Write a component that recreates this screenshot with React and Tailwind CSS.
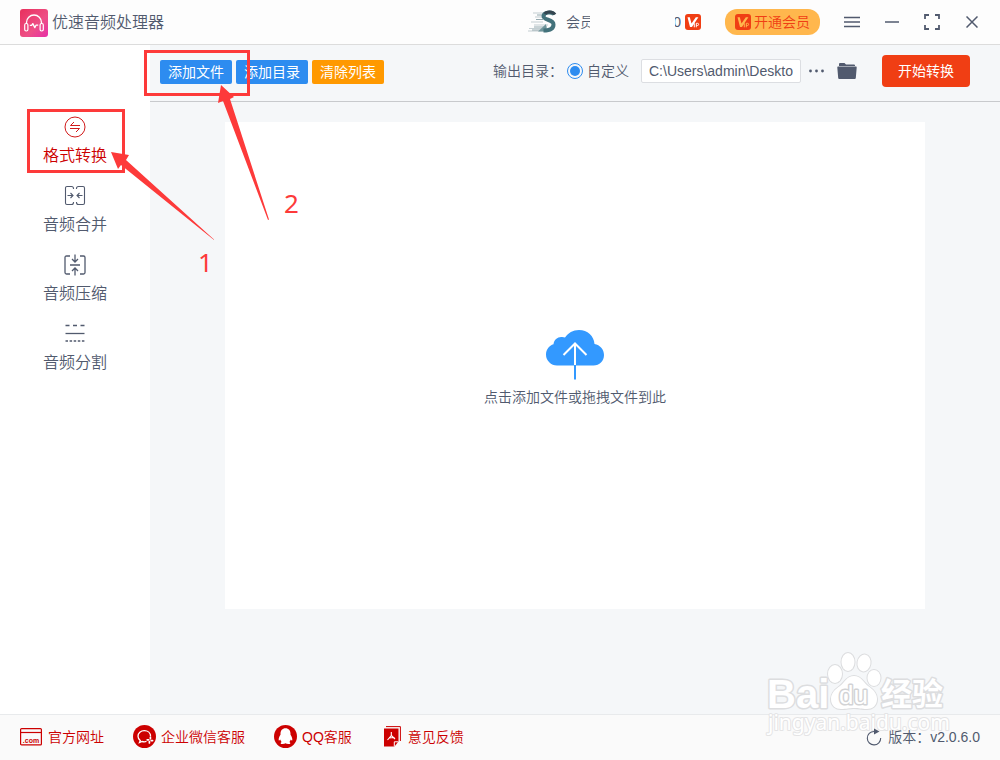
import { useState } from 'react';

const LogoIcon = () => (
    <svg width="28" height="28" viewBox="0 0 28 28" fill="none">
        <defs>
            <linearGradient id="logoBg" x1="0" y1="0" x2="1" y2="1">
                <stop offset="0" stopColor="#e8305c" />
                <stop offset="0.6" stopColor="#ee4f86" />
                <stop offset="1" stopColor="#e62fa8" />
            </linearGradient>
        </defs>
        <rect width="28" height="28" rx="3" fill="url(#logoBg)" />
        <path d="M6.5 15V13.5a7.5 7.5 0 0 1 15 0V15" stroke="#fff" strokeWidth="1.3" />
        <rect x="4.7" y="14.5" width="3.2" height="7.5" rx="1.4" stroke="#fff" strokeWidth="1.2" />
        <rect x="20.1" y="14.5" width="3.2" height="7.5" rx="1.4" stroke="#fff" strokeWidth="1.2" />
        <path d="M9.8 16.4h1.8l1.2-1.8 2 4 1.2-2.4h2.2" stroke="#fff" strokeWidth="1.3" strokeLinejoin="round" />
    </svg>
);

const AvatarIcon = () => (
    <svg width="30" height="24" viewBox="0 0 30 24" fill="none">
        <path d="M5 3h11M7 7h7M3 12h12M6 15h14M1 18.500h17M0 21h16" stroke="#c3ced2" strokeWidth="1.200" />
        <path d="M9 5h6M8 9.500h7M6 17h13M4 20h14" stroke="#93a8ae" strokeWidth="1" />
        <path d="M18 14 10 21.500h9z" fill="#6f959b" />
        <path d="M26 4.500c-2-3-10-2.500-10.500 1.500-.5 4.500 10 3 10 8.500 0 4.500-5 6-10 6" stroke="#43727b" strokeWidth="4" />
        <path d="M27 4.500c-2-3-8.500-3.500-10-.5" stroke="#34454f" strokeWidth="3" />
    </svg>
);

const VipIcon = ({ color = '#fff' }) => (
    <svg width="16" height="16" viewBox="0 0 16 16" fill="none">
        <rect width="16" height="16" rx="3" fill="#f03e14" />
        <path d="M2.500 3.200h2.300l1.700 6.200 4.300-6.200h2.600L7 13H5z" fill={color} />
        <path d="M9.300 9.300v4M11.300 13.300v-4h1.200a1.100 1.100 0 0 1 0 2.200h-1.200" stroke={color} strokeWidth="1" />
    </svg>
);

const ConvertIcon = () => (
    <svg width="22" height="22" viewBox="0 0 22 22" fill="none" stroke="currentColor" strokeWidth="0.900">
        <circle cx="11" cy="11" r="10" />
        <path d="M16 9.500H6.500l3.500-3.500M6 12.500h9.500L12 16" />
    </svg>
);

const MergeIcon = () => (
    <svg width="22" height="22" viewBox="0 0 22 22" fill="none" stroke="currentColor" strokeWidth="1.100">
        <path d="M9.500 4V3.500a2 2 0 0 0-2-2H3a1.500 1.500 0 0 0-1.500 1.500v15A1.500 1.500 0 0 0 3 19.500h4.500a2 2 0 0 0 2-2V17" />
        <path d="M12.500 4V3.500a2 2 0 0 1 2-2H19A1.500 1.500 0 0 1 20.500 3v15a1.500 1.500 0 0 1-1.500 1.500h-4.500a2 2 0 0 1-2-2V17" />
        <path d="M3.500 10.500H9M6.500 8 9 10.500 6.500 13M18.500 10.500H13M15.500 8 13 10.500l2.500 2.500" />
    </svg>
);

const CompressIcon = () => (
    <svg width="22" height="22" viewBox="0 0 22 22" fill="none" stroke="currentColor" strokeWidth="1.300">
        <path d="M6 2H2.500Q1 2 1 3.500v15Q1 20 2.500 20H6M16 2h3.500Q21 2 21 3.500v15q0 1.500-1.500 1.500H16" />
        <path d="M6 11h10M11 0.500V8M8 5l3 3 3-3M11 21.500V14M8 17l3-3 3 3" />
    </svg>
);

const SplitIcon = () => (
    <svg width="22" height="22" viewBox="0 0 22 22" fill="none" stroke="currentColor">
        <path d="M1.500 2.500h4M9 2.500h4M16.500 2.500h4" strokeWidth="1.400" />
        <path d="M1.500 10.500h19" strokeWidth="1.300" />
        <path d="M1.500 18h19" strokeWidth="1.300" strokeDasharray="2.500 1.600" />
    </svg>
);

const FolderIcon = () => (
    <svg width="20" height="18" viewBox="0 0 20 18" fill="#515a6e">
        <path d="M2 4V2Q2 1 3 1h4.500L9 2.500h8q1 0 1 1V4z" />
        <path d="M1 4.600h18q.8 0 .7.800L18.800 16q-.1 1-1 1H2.200q-.9 0-1-1L.3 5.400Q.2 4.600 1 4.600z" />
    </svg>
);

const CloudIcon = () => (
    <svg width="60" height="52" viewBox="0 0 60 52" fill="none">
        <path
            d="M12 36.500A11 11 0 0 1 1 25.500c0-5 3.200-9 7.500-10.300C9 10.500 13 7.500 17 8q1.800 0 3 .5C23 4 28 1 34 1c8.500 0 15 6 15.500 14C55 16 59 20.300 59 26c0 6-4.500 10.500-10.500 10.500z"
            fill="#3399ff"
        />
        <path d="M30 36v14.500" stroke="#3399ff" strokeWidth="2" />
        <path d="M30 36V14.500M18.500 26 30 14.500 41.500 26" stroke="#fff" strokeWidth="2" />
    </svg>
);

const SiteIcon = () => (
    <svg width="22" height="18" viewBox="0 0 22 18" fill="none" stroke="#c00">
        <rect x="0.600" y="0.600" width="20.800" height="16.300" rx="1" strokeWidth="1.200" />
        <path d="M1 4.500h20" strokeWidth="1.200" />
        <text x="11" y="14.500" textAnchor="middle" fontSize="7" fontWeight="700" fontFamily="Liberation Sans, sans-serif" fill="#c00" stroke="none">
            .com
        </text>
    </svg>
);

const WechatIcon = () => (
    <svg width="23" height="23" viewBox="0 0 23 23" fill="none">
        <circle cx="11.500" cy="11.500" r="11.500" fill="#c00" />
        <path d="M17.600 11.500c0-3.500-2.800-5.800-6.300-5.800S5 8 5 11.300c0 1.800.9 3.300 2.300 4.300l-.8 2 2.600-1.100q2.400.6 4.400-.1" stroke="#fff" strokeWidth="1.300" />
        <path d="M14.200 14.800h1.400M17.400 12.300v1.400M19.600 15.600h-1.400M16.400 18v-1.400" stroke="#fff" strokeWidth="1.700" strokeLinecap="round" />
    </svg>
);

const QQIcon = () => (
    <svg width="23" height="23" viewBox="0 0 23 23" fill="none">
        <circle cx="11.500" cy="11.500" r="11.500" fill="#c00" />
        <path
            d="M11.500 3.200c-3.200 0-5 2.300-5 5.300v1.300c-1.200 1.700-2 3.600-1.800 5.200.1 1 .8.700 1.500-.4.300 1 .8 1.700 1.400 2.300-1.600.7-1.400 2.200 1 2.200 1.300 0 2.300-.3 2.900-.8.600.5 1.600.8 2.900.8 2.400 0 2.600-1.500 1-2.200.6-.6 1.100-1.300 1.400-2.300.7 1.100 1.400 1.400 1.500.4.200-1.600-.6-3.500-1.800-5.200V8.500c0-3-1.800-5.300-5-5.300z"
            fill="#fff"
        />
    </svg>
);

const FeedbackIcon = () => (
    <svg width="17" height="21" viewBox="0 0 17 21" fill="none">
        <path d="M2 .6h14.400V15" stroke="#c00" strokeWidth="1" />
        <path d="M0 2.500h14.500v13L10.500 20.500H0z" fill="#c00" />
        <path d="M10.300 20.500v-4.700h4.200" stroke="#fff" strokeWidth="1" />
        <path d="M7.300 6v3.500L3.500 14M7.300 9.500 11 13M5 12l5.500-.5" stroke="#fff" strokeWidth="1.100" />
    </svg>
);

const RefreshIcon = () => (
    <svg width="16" height="18" viewBox="0 0 16 18" fill="none">
        <path d="M9 3.500H8A6.700 6.700 0 1 0 14.700 10" stroke="#515a6e" strokeWidth="1.100" />
        <path d="M8 0.500 13.500 3.500 8 6.500z" fill="#515a6e" />
    </svg>
);

const menuList = [
    { name: '格式转换', icon: ConvertIcon },
    { name: '音频合并', icon: MergeIcon },
    { name: '音频压缩', icon: CompressIcon },
    { name: '音频分割', icon: SplitIcon },
];

const Header = () => (
    <header className="flex h-[45px] items-center border-b border-[#dcdcdc] bg-[#fdfdfd] pl-5 pr-[18px]">
        <div className="flex items-center gap-1 pt-[2px]">
            <LogoIcon />
            <h1 className="text-base font-[350]">优速音频处理器</h1>
        </div>

        <div className="ml-auto flex items-center">
            <AvatarIcon />
            <span className="ml-2 w-6 overflow-hidden whitespace-nowrap">会员</span>
            <span className="ml-[85px] mr-1 flex w-[6px] justify-end overflow-hidden">0</span>
            <VipIcon />
            <button className="ml-6 flex h-[26px] items-center gap-[3px] rounded-xl bg-[#ffb74d] px-[10px] text-[#f03e14]">
                <VipIcon color="#ffb74d" />
                开通会员
            </button>
        </div>

        <div className="ml-[22px] flex items-center gap-5">
            <button aria-label="菜单" className="flex size-5 items-center justify-center">
                <svg width="16" height="12" viewBox="0 0 16 12" stroke="currentColor" strokeWidth="1.500">
                    <path d="M0 1.500h16M0 6h16M0 10.500h16" />
                </svg>
            </button>
            <button aria-label="最小化" className="flex size-5 items-center justify-center">
                <svg width="14" height="2" viewBox="0 0 14 2" stroke="currentColor" strokeWidth="1.500">
                    <path d="M0 1h14" />
                </svg>
            </button>
            <button aria-label="最大化" className="flex size-5 items-center justify-center">
                <svg width="16" height="16" viewBox="0 0 16 16" fill="none" stroke="currentColor" strokeWidth="1.800">
                    <path d="M1 5V1h4M11 1h4v4M15 11v4h-4M5 15H1v-4" />
                </svg>
            </button>
            <button aria-label="关闭" className="flex size-5 items-center justify-center">
                <svg width="12" height="12" viewBox="0 0 12 12" stroke="currentColor" strokeWidth="1.500">
                    <path d="M.5.5l11 11M11.500.5l-11 11" />
                </svg>
            </button>
        </div>
    </header>
);

const Sidebar = ({ active, onChange }) => (
    <nav className="flex w-[150px] shrink-0 flex-col gap-[17px] bg-white pt-[71px]">
        {menuList.map((item, index) => (
            <div key={item.name} className="relative">
                <button
                    onClick={() => onChange(index)}
                    className={`flex w-full flex-col items-center gap-[6px] text-base leading-6 ${active === index ? 'text-[#c00]' : ''}`}
                >
                    <item.icon />
                    {item.name}
                </button>
                {index === 0 && (
                    <div className="pointer-events-none absolute -top-[7px] left-[27px] h-16 w-[98px] border-3 border-[#fd3a3a]" />
                )}
            </div>
        ))}
    </nav>
);

const Toolbar = () => (
    <div className="flex h-[57px] items-center border-b border-[#c8cacd] pb-[3px] pl-[10px] pr-[30px]">
        <div className="relative flex gap-1 text-white">
            <button className="h-6 rounded-xs bg-[#2d8cf0] px-2 font-normal">添加文件</button>
            <button className="h-6 rounded-xs bg-[#2d8cf0] px-2 font-normal">添加目录</button>
            <button className="h-6 rounded-xs bg-[#ff9900] px-2 font-normal">清除列表</button>
            <div className="pointer-events-none absolute -left-4 -top-[10px] h-[46px] w-[106px] border-3 border-[#fd3a3a]" />
        </div>

        <div className="mb-[2px] ml-auto flex items-center">
            <span>输出目录：</span>
            <label className="ml-1 flex items-center gap-1">
                <input
                    type="radio"
                    name="output"
                    defaultChecked
                    className="size-4 appearance-none rounded-full border border-[#2d8cf0] bg-[#2d8cf0] bg-clip-content p-[2px]"
                />
                自定义
            </label>
            <input
                type="text"
                aria-label="输出目录"
                defaultValue="C:\Users\admin\Deskto"
                className="ml-3 h-6 w-40 rounded-xs border border-[#dcdee2] bg-white px-[7px] font-normal"
            />
            <button aria-label="更多" className="ml-2">
                <svg width="16" height="4" viewBox="0 0 16 4" fill="currentColor">
                    <circle cx="1.500" cy="2" r="1.400" />
                    <circle cx="7.500" cy="2" r="1.400" />
                    <circle cx="13.500" cy="2" r="1.400" />
                </svg>
            </button>
            <button aria-label="打开文件夹" className="ml-3">
                <FolderIcon />
            </button>
            <button className="ml-[25px] h-8 rounded-sm bg-[#f03e14] px-4 font-normal text-white">开始转换</button>
        </div>
    </div>
);

const Footer = () => (
    <footer className="flex h-[46px] items-center border-t border-[#e8eaec] bg-[#fafafa] px-5 pb-[2px]">
        <div className="flex items-center gap-[29px] text-[#c00]">
            <a href="#site" className="flex items-center gap-[6px]">
                <SiteIcon />
                官方网址
            </a>
            <a href="#wechat" className="flex items-center gap-[5px]">
                <WechatIcon />
                企业微信客服
            </a>
            <a href="#qq" className="flex items-center gap-[5px]">
                <QQIcon />
                QQ客服
            </a>
            <a href="#feedback" className="ml-[3px] flex items-center gap-[7px]">
                <FeedbackIcon />
                意见反馈
            </a>
        </div>
        <div className="z-10 ml-auto flex items-center gap-[6px]">
            <RefreshIcon />
            <span>版本：v2.0.6.0</span>
        </div>
    </footer>
);

// arrows and step numbers
const Guide = () => (
    <svg className="pointer-events-none absolute left-0 top-0" width="320" height="290" viewBox="0 0 320 290" fill="#fd3a3a">
        <path d="M111 152l18 3-3 5L214 239.500 214 240 121 165l-3 4z" />
        <path d="M221 85l13 12-4 2L269 219.500 268 220 223 101l-5 2z" />
        <text x="198" y="272" fontSize="26" fontWeight="400" fontFamily="Noto Sans, sans-serif">1</text>
        <text x="284" y="213" fontSize="26" fontWeight="400" fontFamily="Noto Sans, sans-serif">2</text>
    </svg>
);

const Watermark = () => (
    <svg
        className="pointer-events-none absolute bottom-5 right-[50px]"
        width="186"
        height="90"
        viewBox="0 0 186 90"
        fill="#fff"
        stroke="#dcdddf"
        strokeWidth="3"
        strokeLinejoin="round"
        paintOrder="stroke"
        fontFamily="Liberation Sans, Noto Sans CJK SC, sans-serif"
    >
        <text x="3" y="58" fontSize="40" fontWeight="700">Bai</text>
        <g strokeWidth="2">
            <ellipse cx="71" cy="24" rx="7" ry="9" />
            <ellipse cx="84" cy="12" rx="6.500" ry="9" />
            <ellipse cx="100" cy="13" rx="6.500" ry="8.500" transform="rotate(10 100 13)" />
            <ellipse cx="110" cy="28" rx="6.500" ry="8" />
            <path d="M90 26c-7 0-9 6-14 10-5 3.500-9 7-9 13 0 7 5 10 10 10 6 0 8-1 13-1s7 1 13 1c5 0 10-3 10-10 0-6-4-9.500-9-13-5-4-7-10-14-10z" />
        </g>
        <text x="75" y="54" fontSize="26" fontWeight="400" stroke="#d2d3d5">du</text>
        <text x="117" y="55" fontSize="31" fontWeight="700">经验</text>
        <text x="4" y="80" fontSize="21" fontWeight="400" strokeWidth="2" stroke="#e4e4e5" fontFamily="Noto Sans, sans-serif">jingyan.baidu.com</text>
    </svg>
);

const App = () => {
    const [active, setActive] = useState(0);

    return (
        <div className="relative flex min-h-screen flex-col bg-[#f5f7f9] font-['Liberation_Sans','Noto_Sans_CJK_SC',sans-serif] text-sm font-[350] text-[#515a6e]">
            <Header />
            <div className="flex flex-1">
                <Sidebar active={active} onChange={setActive} />
                <main className="flex flex-1 flex-col">
                    <Toolbar />
                    <div className="mx-[75px] mb-[105px] mt-5 flex flex-1 flex-col items-center justify-center gap-[6px] bg-white pt-[5px]">
                        <CloudIcon />
                        <p>点击添加文件或拖拽文件到此</p>
                    </div>
                </main>
            </div>
            <Footer />
            <Watermark />
            <Guide />
        </div>
    );
};

export default App;
